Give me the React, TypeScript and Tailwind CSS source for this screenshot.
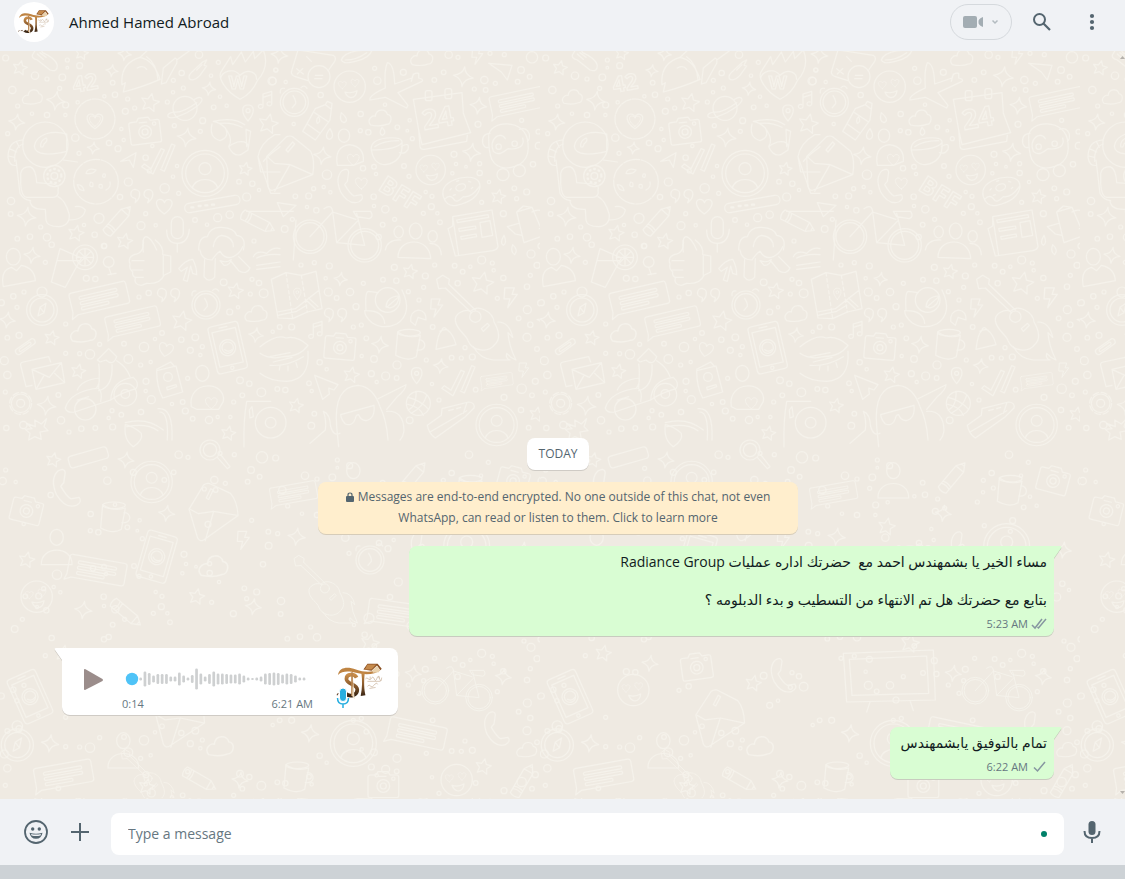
import type { ReactNode } from 'react'

type Spot = [x: number, y: number, size: number]

interface PatchProps {
  x: number
  y: number
  dots: Spot[]
  stars?: Spot[]
  sparkles?: Spot[]
  children?: ReactNode
}

interface PlaceProps {
  at: [number, number]
  scale?: number
  turn?: number
  children: ReactNode
}

const TEXT = 'font-["Open_Sans","DejaVu_Sans",sans-serif]'

// heights of the voice message bars, left to right
const BARS = [
  3, 15, 12, 7, 10, 10, 10, 5, 5, 13, 7, 3, 8, 21, 11, 5, 10, 15, 11, 11, 10, 9, 9, 11, 7, 3, 2, 3,
  5, 11, 12, 13, 12, 9, 11, 10, 7, 3, 3,
]

const DOTS_A: Spot[] = [
  [17, 24, 9], [105, 77, 11], [141, 87, 6], [187, 82, 10], [239, 47, 9], [202, 30, 6], [202, 53, 4],
  [37, 120, 11], [179, 115, 6], [53, 168, 6], [197, 165, 9], [233, 157, 5], [345, 134, 8],
  [338, 98, 7], [313, 139, 5], [383, 147, 6], [376, 184, 9], [404, 174, 6], [545, 69, 8],
  [520, 91, 6], [519, 127, 5], [550, 114, 6], [502, 156, 6], [597, 14, 11], [655, 37, 6],
  [633, 77, 5], [641, 172, 7], [680, 167, 5], [816, 93, 12], [828, 60, 6], [660, 140, 5],
  [96, 191, 5], [141, 195, 8], [196, 195, 5], [23, 251, 6], [226, 263, 11], [327, 279, 8],
  [354, 296, 9], [364, 237, 5], [371, 270, 5], [237, 310, 6], [437, 323, 8], [457, 288, 5],
  [523, 227, 6], [601, 244, 6], [608, 212, 9], [385, 396, 12], [360, 441, 8], [494, 415, 14],
  [519, 380, 5], [531, 348, 5], [448, 363, 6], [536, 430, 6], [717, 395, 7], [757, 401, 8],
  [777, 420, 5], [740, 441, 12], [33, 453, 11], [32, 492, 7], [297, 505, 15], [423, 527, 12],
  [437, 491, 6], [467, 526, 5], [585, 510, 7], [653, 503, 12], [689, 494, 11], [621, 524, 5],
  [141, 562, 11], [90, 560, 8], [52, 566, 7], [122, 531, 6], [284, 554, 8], [252, 525, 5],
  [762, 573, 6], [313, 588, 7],
]

const DOTS_B: Spot[] = [
  [17, 60, 6], [8, 93, 11], [47, 96, 5], [152, 135, 8], [314, 55, 6], [322, 92, 11], [400, 67, 9],
  [493, 90, 7], [521, 67, 7], [536, 14, 11], [564, 22, 6], [643, 90, 11], [676, 100, 6],
  [613, 117, 6], [647, 120, 7], [660, 10, 6], [703, 14, 6], [743, 95, 7], [753, 60, 10],
  [779, 80, 7], [786, 22, 17], [345, 164, 5], [272, 192, 8], [271, 242, 6], [295, 247, 8],
  [382, 232, 7], [412, 242, 4], [427, 266, 6], [419, 211, 5], [624, 223, 9], [71, 222, 5],
  [805, 245, 7], [806, 287, 10], [552, 313, 9], [558, 342, 5], [547, 370, 5], [588, 350, 4],
  [629, 369, 8], [629, 341, 6], [402, 348, 7], [417, 379, 6], [318, 372, 5], [312, 350, 7],
  [279, 355, 8], [171, 374, 14], [131, 416, 6], [161, 411, 5], [116, 438, 9], [76, 439, 7],
  [181, 427, 5], [111, 471, 5], [139, 481, 8], [67, 508, 6], [44, 537, 10], [311, 440, 8],
  [312, 468, 5], [346, 478, 11], [338, 524, 7], [326, 561, 8], [374, 508, 6], [467, 426, 5],
  [486, 439, 6], [484, 470, 9], [502, 490, 5], [460, 490, 6], [510, 517, 7], [635, 457, 6],
  [657, 396, 5], [733, 415, 7], [740, 446, 6], [770, 426, 9], [789, 343, 8], [700, 491, 9],
  [755, 211, 6],
]

const DOTS_C: Spot[] = [
  [155, 14, 8], [136, 67, 6], [312, 18, 8], [259, 115, 9], [286, 117, 8], [40, 169, 8],
  [72, 156, 6], [4, 188, 9], [51, 202, 6], [22, 293, 7], [57, 286, 9], [197, 252, 6],
  [417, 171, 6], [446, 159, 8], [671, 127, 10], [756, 118, 6], [777, 129, 8], [791, 160, 13],
  [751, 162, 6], [714, 202, 5], [689, 216, 9], [13, 362, 12], [22, 405, 11], [16, 456, 6],
  [197, 340, 6], [239, 341, 6], [270, 343, 14], [299, 313, 6], [385, 357, 13], [372, 311, 7],
  [432, 321, 14], [465, 297, 5], [486, 279, 7], [422, 375, 6], [452, 366, 5], [544, 299, 8],
  [586, 292, 10], [571, 331, 9], [607, 320, 6], [601, 345, 5], [438, 424, 9], [437, 453, 5],
  [454, 479, 12], [563, 415, 6], [175, 465, 7], [183, 541, 11], [70, 555, 11], [19, 564, 8],
  [207, 576, 6], [244, 566, 8], [286, 564, 7], [336, 512, 6], [364, 524, 7], [326, 534, 5],
  [338, 561, 9], [423, 516, 8], [516, 492, 5], [548, 486, 7], [556, 513, 9], [578, 536, 7],
  [627, 540, 11], [653, 531, 5], [691, 531, 5], [701, 486, 6], [720, 421, 10], [748, 431, 8],
  [784, 457, 13], [727, 466, 7],
]

const DOTS_D: Spot[] = [
  [93, 75, 6], [133, 68, 6], [178, 78, 9], [167, 115, 5], [175, 156, 12], [240, 156, 11],
  [200, 174, 7], [280, 130, 6], [258, 200, 9], [339, 119, 7], [379, 122, 8], [373, 82, 9],
  [466, 108, 9], [494, 75, 6], [415, 155, 6], [461, 142, 6], [447, 180, 6], [554, 77, 7],
  [578, 95, 7], [601, 80, 5], [635, 60, 12], [667, 69, 6], [671, 91, 5], [563, 130, 8],
  [700, 114, 8], [783, 42, 12], [812, 18, 8], [801, 76, 9], [771, 140, 8], [781, 106, 6],
  [682, 175, 6], [772, 209, 12], [746, 235, 7], [781, 254, 8], [771, 292, 12], [812, 189, 9],
  [29, 261, 7], [65, 261, 9], [8, 275, 5], [250, 261, 6], [274, 255, 6], [289, 295, 7],
  [312, 357, 10], [275, 348, 5], [149, 367, 8], [170, 388, 5], [381, 375, 12], [347, 408, 12],
  [304, 401, 9], [380, 414, 7], [320, 426, 5], [488, 261, 7], [545, 353, 7], [574, 354, 6],
  [607, 351, 9], [585, 323, 6], [801, 327, 7], [469, 360, 6], [486, 432, 5], [507, 480, 6],
  [617, 449, 7], [702, 472, 9], [755, 446, 14], [796, 424, 9], [786, 466, 7], [753, 510, 8],
  [117, 430, 7], [125, 453, 5], [22, 447, 7], [46, 450, 8], [133, 521, 7], [124, 557, 10],
  [419, 541, 10], [776, 563, 7],
]

const STAR =
  'M0-10 3-3.6 9.6-3.1 4.6 1.6 6 8.3 0 5-6 8.3-4.6 1.6-9.6-3.1-3-3.6Z'
const SPARKLE = 'M0-10Q1-2 10 0 1 2 0 10-1 2-10 0-1-2 0-10Z'
const HEART = 'M0 24C-30 4-28-20-13-20-5-20-1-14 0-10 2-15 7-21 15-19 29-16 26 6 0 24Z'

function Place({ at, scale = 1, turn = 0, children }: PlaceProps) {
  return <g transform={`translate(${at[0]} ${at[1]}) rotate(${turn}) scale(${scale})`}>{children}</g>
}

function Patch({ x, y, dots, stars = [], sparkles = [], children }: PatchProps) {
  return (
    <g transform={`translate(${x} ${y})`}>
      {dots.map(([cx, cy, r]) => (
        <circle key={`${cx}-${cy}`} cx={cx} cy={cy} r={r} />
      ))}
      {stars.map(([sx, sy, r]) => (
        <path key={`${sx}-${sy}`} d={STAR} strokeWidth={36 / r} transform={`translate(${sx} ${sy}) rotate(12) scale(${r / 10})`} />
      ))}
      {sparkles.map(([sx, sy, r]) => (
        <path key={`${sx}-${sy}`} d={SPARKLE} strokeWidth={36 / r} transform={`translate(${sx} ${sy}) rotate(8) scale(${r / 10})`} />
      ))}
      {children}
    </g>
  )
}

const Heart = () => <path d={HEART} />
const Cloud = () => <path d="M-28 20C-42 4-22-10-14-6-12-30 18-30 22-12 40-10 34 18 20 18Q0 26-28 20Z" />
const Camera = () => (
  <>
    <path d="M-46-24Q-46-30-38-30H-22L-16-40H14L20-30H40Q46-30 46-24V32Q46 38 40 38H-40Q-46 38-46 32Z" />
    <circle r="19" cy="3" />
    <circle r="9" cy="3" />
    <circle r="5" cx="30" cy="-19" />
    <path d="M-14-26H8" />
  </>
)
const Avatar = () => (
  <>
    <circle r="69" />
    <circle r="58" />
    <circle r="18" cy="-14" />
    <path d="M-38 44C-30 10 30 10 38 44" />
  </>
)
const Smiley = () => (
  <>
    <circle r="47" />
    <Place at={[-22, -6]} scale={0.5}><Heart /></Place>
    <Place at={[16, -12]} scale={0.5}><Heart /></Place>
    <path d="M-14 16Q4 22 22 12 20 32 4 33-8 32-14 16Z" />
  </>
)
const Card = () => (
  <>
    <path d="M-78-34H80Q88-34 88-26V26Q88 34 80 34H-72L-92 44-86 26V-26Q-86-34-78-34Z" />
    <rect x="-58" y="-18" width="116" height="9" rx="4" />
    <rect x="-58" y="-2" width="116" height="9" rx="4" />
    <rect x="-58" y="14" width="84" height="9" rx="4" />
  </>
)
const Clock = () => (
  <>
    <circle r="42" />
    <circle r="34" />
    <path d="M-4-20Q6-4 4 4L-6 16M-42-28Q-44-44-30-42M20-44Q30-54 38-42" />
  </>
)
const Pencil = () => (
  <path d="M-52-15H30L54 0 30 15H-52Q-60 0-52-15ZM30-15V15M-30-15Q-24 0-30 15M-38-15Q-32 0-38 15M45-6V6" />
)
const Note = () => <path d="M-8 20V-18L18-26V12M-8-8 18-16M-8 20A7 6 0 1 1-12 14M18 12A7 6 0 1 1 14 6" />
const Pin = () => (
  <>
    <path d="M0 26C-24-2-18-22 0-22S24-2 0 26Z" />
    <circle r="6" cy="-5" />
  </>
)
const Quotes = () => (
  <path d="M-24 18Q-12 8-12-4A12 12 0 1 0-26 6Q-20 6-24 18ZM10 18Q24 8 24-4A12 12 0 1 0 9 6Q16 6 10 18Z" />
)
const Bolt = () => <path d="M-16-26H10L4-8H18L-8 28-2 4H-18Z" />
const Checks = () => (
  <path d="M-50 20-42 12-22 26 8-34 18-30-16 42ZM10 24 40-48 50-44 18 34 6 28" />
)
const Guitar = () => (
  <>
    <path d="M-8-22C14-46 60-20 62 10 76 34 84 60 64 78 44 104-2 98-16 66-22 46-50 36-54 6-56-16-26-30-8-22Z" />
    <circle r="17" cx="6" cy="-6" />
    <path d="M-6-18-84-92M6-26-74-104M-84-92-104-90-110-118-92-130-72-118-74-104M24 30 42 14 48 20 30 38Z" />
    <path d="M74 10Q108 10 118 56L104 42Q106 80 128 124 112 118 100 104 96 120 110 124H60Q20 120 0 84" />
  </>
)
const Mug = () => (
  <>
    <path d="M-32-36-38 34Q0 54 24 38L36-26Q0-14-32-36Z" />
    <ellipse rx="34" ry="10" cx="2" cy="-34" />
    <path d="M32-12C54-14 58 22 26 18" />
  </>
)
const Phone = () => (
  <path d="M-24-50Q-6-60-4-46L-8-18Q-14-12-16-8 0 20 12 26L34 22Q44 34 26 44-4 54-28 14-46-28-24-50Z" />
)
const Envelope = () => (
  <path d="M-70-20-10-80Q0-84 8-80L62-36Q76-10 68 34L-50 80Q-62 84-66 70ZM-66-18-46 0 0 4 68 34M-46 84 0 4M-12-40 8-64 14-58-6-34Z" />
)
const Tablet = () => (
  <>
    <rect x="-46" y="-72" width="92" height="144" rx="10" />
    <rect x="-36" y="-54" width="72" height="106" />
    <circle r="24" />
    <circle r="17" />
    <path d="M-10 4Q0 16 12 8M-12-63H12" />
    <circle r="5" cy="62" />
  </>
)
const Person = () => (
  <>
    <ellipse rx="20" ry="24" cy="-38" />
    <path d="M-46 44C-48-14 48-14 46 44Z" />
  </>
)
const Bicycle = () => (
  <>
    <circle r="50" cx="-80" cy="40" />
    <circle r="42" cx="-80" cy="40" />
    <circle r="50" cx="84" cy="66" />
    <circle r="42" cx="84" cy="66" />
    <path d="M-80 40-12-34Q-14-60-38-44M-12-34 58-12M-12-34 0 58 64-8M0 58 84 66 60-30M50-36H102Q112-20 98-14L60-20Z" />
  </>
)
const Compass = () => (
  <>
    <circle r="46" />
    <circle r="36" />
    <circle r="15" cy="-54" />
    <path d="M-12 18-6-8 12-20 6 8ZM-6-8 6 8" />
  </>
)

function Backdrop() {
  return (
    <svg className="absolute inset-0 w-full h-full" aria-hidden="true">
      <defs>
        <pattern id="doodles" width="540" height="748" y="-1" patternUnits="userSpaceOnUse" viewBox="0 0 1620 2244">
          <g fill="none" stroke="#f5f2eb" strokeWidth="3.6" strokeLinejoin="round" strokeLinecap="round">
            <Patch
              x={0}
              y={0}
              dots={DOTS_A}
              stars={[[60, 54, 22], [450, 158, 28], [805, 222, 30], [736, 357, 20], [228, 550, 24], [374, 574, 24], [245, 10, 20]]}
              sparkles={[[168, 152, 28], [336, 62, 18], [627, 116, 20], [50, 216, 24], [560, 262, 28], [280, 294, 18], [80, 500, 28], [374, 12, 20]]}
            >
              <path d="M100 10Q90 24 112 30L150 60Q172 68 172 46 168 26 128 8L122-4 106 0ZM112 12 130 28M120 8 138 22" />
              <text x="222" y="128" fontSize="66" fontWeight="700" transform="rotate(-10 222 128)">42</text>
              <Place at={[97, 142]} scale={0.9}><Cloud /></Place>
              <circle cx="285" cy="207" r="60" strokeDasharray="30 4" />
              <Place at={[285, 212]}><Heart /></Place>
              <Place at={[285, 212]} scale={0.7}><Heart /></Place>
              <Place at={[435, 243]} turn={-7}><Camera /></Place>
              <path d="M420 22Q462 30 480 88 430 110 370 126L376 98 366 104Q360 40 420 22ZM420 22 450-6M440 20Q470 40 474 90M484 102 490 54 526 24Q532 26 530 40L498 98ZM412 54Q430 44 440 58M530 30 580-6" />
              <path d="M568 86Q564 74 580 62L608 36 620 30 612 46 620 48 600 76Q580 96 568 86ZM590 60 606 44" />
              <circle cx="555" cy="175" r="36" />
              <path d="M522 186Q500 190 504 200 514 210 560 188 606 164 606 148 602 136 584 148M522 186Q546 190 590 158" />
              <path d="M720 148C672 120 652 80 664 64L692 20 698 44 724 6 736 36 760 4 764 26 790 0Q810 50 772 92 756 130 720 148ZM720 76C700 50 666 66 662 84M720 76C744 54 770 66 770 88" />
              <text x="686" y="118" fontSize="56" fontWeight="700">W</text>
              <Place at={[797, 150]}><Note /></Place>
              <Place at={[744, 187]}><Pin /></Place>
              <path d="M640 214Q700 200 734 224M660 220Q694 216 726 232M636 222Q626 262 660 272 690 262 676 234 658 216 640 214M680 240Q700 270 686 290 700 320 722 314L744 300Q750 270 712 276 696 282 686 290M744 300 752 244 738 238 740 290" />
              <circle cx="136" cy="284" r="68" />
              <path d="M200 252C160 240 110 250 103 288 104 320 160 314 200 304ZM122 290Q120 272 138 264 146 270 132 282 130 294 122 290Z" />
              <path d="M68 270Q24 272 24 322 28 350 50 346M70 282Q42 290 44 334M28 296 50 306M26 318 44 322M50 276 58 292M48 330 60 430Q70 450 92 452M62 400V370Q66 350 90 350 108 356 110 398L160 402Q180 408 174 420 178 440 160 442H80Q64 440 62 400ZM190 330 232 336M90 452Q92 480 136 478L138 510Q140 530 176 530 210 526 208 494 196 450 174 440M208 510Q250 510 256 480 244 466 226 470" />
              <circle cx="163" cy="378" r="32" />
              <circle cx="163" cy="378" r="10" />
              <circle cx="163" cy="378" r="21" strokeDasharray="2 12" strokeWidth="7" />
              <circle cx="288" cy="395" r="67" strokeDasharray="50 5" />
              <path d="M258 370Q262 352 288 360 280 374 258 370ZM232 404Q248 404 252 422 236 422 232 404ZM310 372Q320 370 314 382 304 382 310 372ZM272 396Q282 396 278 410 264 410 272 396ZM298 404Q310 400 306 414 294 416 298 404ZM330 396Q334 412 318 420" />
              <path d="M362 334 408 308 400 352 388 330Z" />
              <Place at={[475, 330]}><Checks /></Place>
              <Place at={[615, 370]}><Avatar /></Place>
              <Place at={[432, 438]} scale={1.1}><Quotes /></Place>
              <Place at={[355, 510]} turn={-48}><Pencil /></Place>
              <Place at={[775, 517]} turn={27}><Pencil /></Place>
              <Place at={[493, 468]}><Heart /></Place>
              <rect x="553" y="448" width="168" height="28" rx="14" transform="rotate(-10 637 462)" />
              <path d="M574 472H580M596 468H602M616 466H622M636 464H642" strokeWidth="7" />
              <rect x="514" y="500" width="36" height="66" rx="18" />
              <path d="M500 540Q500 580 532 580T568 538M532 582V606" />
              <path d="M840 254H824Q780 280 774 320L812 430H840M774 320 782 366 840 366M840 290Q800 320 790 334" />
              <path d="M430 606Q424 560 440 560 456 566 470 600M596 600Q596 560 622 560 630 530 665 532 704 534 710 556 740 560 730 600M640 590Q644 560 664 556 700 560 700 590" />
            </Patch>
            <Patch
              x={810}
              y={0}
              dots={DOTS_B}
              stars={[[685, 440, 22]]}
              sparkles={[[580, 80, 30], [625, 167, 25], [605, 307, 27], [157, 317, 26], [28, 15, 25]]}
            >
              <path d="M84 0 64 66Q64 76 76 80L114 92M84 0 190 16Q200 22 194 34L176 60M80 56 100 72M98 56 82 72M110 20 124 34" />
              <circle cx="147" cy="80" r="33" />
              <path d="M136 76H158M134 86H156M214 30Q220 10 262 2L306 0Q300 24 256 34 220 44 214 30ZM226 30Q260 30 290 8" />
              <Place at={[455, 24]}><Cloud /></Place>
              <Place at={[330, 205]}><Cloud /></Place>
              <Place at={[622, 18]} scale={0.9}><Bolt /></Place>
              <path d="M656 40 726 46 712 90 694 66Z" />
              <Place at={[239, 110]}><Smiley /></Place>
              <Place at={[482, 360]} scale={0.94}><Smiley /></Place>
              <path d="M352 38Q372 40 374 102L426 84Q430 66 446 70L446 84Q462 88 456 94L384 128 414 166 410 174 346 142 300 150Q296 136 346 114 342 60 352 38ZM430 72 424 94" />
              <path d="M430 148 576 128 580 190 602 248 456 284 446 240ZM446 240 450 290Q452 300 464 298L590 274 592 256" />
              <rect x="466" y="122" width="20" height="30" rx="6" />
              <rect x="525" y="116" width="20" height="30" rx="6" />
              <text x="462" y="240" fontSize="82" fontWeight="700" transform="rotate(-10 462 240)">24</text>
              <Place at={[740, 156]} turn={-12} scale={0.92}><Card /></Place>
              <Place at={[73, 157]}><Clock /></Place>
              <path d="M98 244 136 176 166 164 184 178 180 210 136 270ZM134 188 176 216M112 222 150 250M166 164 172 154 186 160 184 178M146 200Q136 210 142 220 154 216 146 200Z" />
              <path d="M214 188Q206 214 222 218 240 212 214 188ZM180 236Q160 262 178 268 196 262 180 236ZM336 232Q324 252 338 256 352 248 336 232Z" />
              <ellipse cx="222" cy="257" rx="17" ry="20" />
              <path d="M202 346Q192 290 238 284 284 290 280 334L250 346Z" />
              <Place at={[250, 328]} scale={0.75}><Heart /></Place>
              <path d="M304 300Q300 270 350 264 398 260 396 278 380 300 304 300ZM304 300Q312 344 346 344 400 336 396 278M394 290Q420 274 414 298 404 314 388 308M314 290Q340 272 386 272" />
              <Place at={[60, 340]}><Envelope /></Place>
              <Place at={[240, 412]}><Phone /></Place>
              <Place at={[274, 399]} scale={0.75}><Heart /></Place>
              <text x="322" y="418" fontSize="72" fontWeight="700" transform="rotate(32 322 418)">BFF</text>
              <path d="M520 440Q510 400 570 384 630 374 630 410 624 452 560 466 530 472 520 440ZM524 448Q540 430 552 448 560 462 580 440 604 444 628 410" />
              <ellipse cx="572" cy="412" rx="15" ry="10" transform="rotate(-20 572 412)" />
              <path d="M540 420 544 416M560 394 566 392M596 394 602 396M604 416 608 412M550 436 556 434" />
              <path d="M656 262C652 210 770 200 774 280 780 330 750 352 708 354 664 350 656 320 656 262ZM660 250Q634 252 638 280 644 296 654 292M748 238Q770 230 778 252 780 270 772 274M706 266C690 240 654 270 670 304 686 320 704 304 714 296 742 300 766 290 758 264 736 244 706 266ZM690 350V314L700 296M742 350 756 310 740 296M700 320 716 300 722 318" />
              <circle cx="686" cy="290" r="8" />
              <circle cx="734" cy="281" r="8" />
              <circle cx="699" cy="374" r="18" />
              <circle cx="748" cy="362" r="18" />
              <path d="M22 458 78 466 40 500Z" />
              <Place at={[200, 520]}><Bicycle /></Place>
              <ellipse cx="386" cy="546" rx="14" ry="18" />
              <ellipse cx="437" cy="543" rx="19" ry="24" />
              <ellipse cx="488" cy="559" rx="14" ry="17" />
              <path d="M384 622C384 560 480 560 482 626ZM346 600Q352 568 392 570M480 580Q512 580 514 614" />
              <path d="M548 500 666 480 684 590Q680 600 668 602L556 618 534 536 548 528ZM548 500 566 616M560 510 654 494 656 502 562 518ZM566 536 616 528 618 536 568 544ZM572 560 618 552 620 560 574 568ZM630 518 660 512 668 556 636 562Z" />
              <path d="M740 486 786 472 822 556 762 578ZM746 520 712 530 736 552 756 556M786 486Q816 470 822 500 824 530 808 536M740 486 760 468 786 472" />
              <path d="M702 556Q688 580 700 586 712 580 702 556ZM728 584Q720 606 734 614 746 600 728 584Z" />
            </Patch>
            <Patch
              x={0}
              y={570}
              dots={DOTS_C}
              stars={[[155, 294, 22], [235, 394, 22], [545, 243, 30], [706, 153, 24], [685, 580, 22]]}
              sparkles={[[96, 46, 24], [22, 240, 24], [140, 497, 28], [768, 285, 22]]}
            >
              <ellipse cx="40" cy="50" rx="21" ry="25" />
              <path d="M10 140Q0 90 34 82L50 92 64 76Q104 84 106 122Z" />
              <path d="M180 26 244 54 196 142 154 126ZM172 62H238" />
              <circle cx="255" cy="52" r="37" />
              <circle cx="255" cy="52" r="26" />
              <path d="M255 28V76M231 52H279M238 35 272 69M272 35 238 69" />
              <circle cx="326" cy="66" r="16" />
              <path d="M326 82 334 104M324 104 348 100" />
              <path d="M430 0Q434 40 402 44 382 52 390 72 386 86 398 96 396 108 406 112 400 134 424 136L440 130Q480 134 492 106L512 96V48L488 44Q492 20 466 0M396 62H432M396 90H428M404 112H430M490 46V106" />
              <path d="M536 86Q556 60 578 58 590 80 590 104L578 100 572 78 562 124 550 120 562 82 544 94Z" />
              <path d="M600 30Q604 60 636 60 650 40 660 34 676 60 700 50 720 40 728 20M614 56 612 110Q626 130 644 112L646 56M716 50 750 84Q740 106 716 92L690 60M660 62Q680 70 694 58 688 78 672 76Z" />
              <path d="M760 50Q770 30 800 40 820 20 840 26M770 54Q800 40 840 44M770 76 840 66M770 88 840 80" />
              <Place at={[297, 175]} turn={-13}><Card /></Place>
              <Place at={[397, 245]} turn={-13} scale={0.92}><Card /></Place>
              <Place at={[126, 210]}><Compass /></Place>
              <Place at={[250, 280]} scale={1.15}><Cloud /></Place>
              <Place at={[768, 222]}><Cloud /></Place>
              <rect x="42" y="311" width="68" height="18" rx="9" transform="rotate(-35 76 320)" />
              <rect x="54" y="316" width="42" height="8" rx="4" transform="rotate(-35 76 320)" />
              <path d="M96 436 78 440 62 376Q60 368 70 366L146 350 152 366" />
              <path d="M96 388 184 368 194 428 108 448ZM96 388 148 412 184 368M108 448 132 406M194 428 164 400" />
              <path d="M196 504Q210 454 296 444 300 390 296 372M196 504Q200 520 224 516L332 480Q336 420 400 412 420 430 408 446 360 460 332 480M302 484Q308 456 296 446M232 450Q244 420 298 414 300 430 288 446M336 374Q340 440 296 452M350 362Q380 380 390 410M292 360 326 326 350 350Q340 380 318 360L300 366ZM232 480 266 470" />
              <circle cx="256" cy="508" r="32" />
              <circle cx="376" cy="464" r="34" />
              <circle cx="376" cy="462" r="13" />
              <circle cx="62" cy="490" r="33" strokeDasharray="18 8" />
              <circle cx="62" cy="490" r="28" />
              <circle cx="62" cy="490" r="12" />
              <path d="M80 550 106 560 104 540 124 552 140 536 132 560 144 572 120 576 124 598 104 590 86 600 90 580 76 568 96 566Z" />
              <Place at={[512, 165]} scale={1.1}><Quotes /></Place>
              <Place at={[618, 195]}><Clock /></Place>
              <Place at={[498, 328]} scale={0.9} turn={12}><Heart /></Place>
              <Place at={[683, 323]} turn={-13}><Tablet /></Place>
              <path d="M470 392 528 378 548 456 488 474Q470 440 470 392ZM470 388 512 366 524 380M500 442 528 434 530 440 502 450Z" />
              <circle cx="504" cy="411" r="13" />
              <path d="M574 500C560 420 680 420 670 484L656 508H590Z" />
              <ellipse cx="607" cy="400" rx="20" ry="24" />
              <Place at={[634, 488]} scale={0.75}><Heart /></Place>
              <path d="M376 548Q440 530 490 570M380 560Q440 548 474 572M474 506Q520 500 516 600M480 516Q506 516 502 600M376 554Q370 600 400 620 430 600 424 580 402 560 376 554" />
              <path d="M740 484H812M740 484Q730 540 732 620M748 510 756 500 760 530 750 534Z" />
            </Patch>
            <Patch
              x={810}
              y={570}
              dots={DOTS_D}
              stars={[[637, 130, 34], [420, 95, 22], [244, 405, 24], [78, 497, 22], [800, 523, 22]]}
              sparkles={[[212, 117, 20], [330, 314, 25], [512, 378, 22], [825, 242, 24]]}
            >
              <path d="M4 118 48 98 94 106 138 94 156 206 112 216 68 236 24 234ZM22 216 76 206 148 150M24 226 80 214 110 196M108 180 136 206M116 174 144 200" />
              <path d="M48 98 68 236M94 106 112 216" strokeDasharray="10 8" />
              <Place at={[82, 160]} scale={0.7}><Pin /></Place>
              <path d="M288 210Q284 154 296 154L324 158M396 150Q430 220 380 252 340 270 306 248 284 230 284 212 340 210 344 250" />
              <circle cx="353" cy="180" r="37" />
              <path d="M348 200Q350 170 386 168 388 196 360 204ZM350 202 384 172" />
              <path d="M422 244Q420 214 446 210 470 214 468 240L444 232 436 256Z" />
              <Place at={[415, 312]}><Mug /></Place>
              <path d="M498 328Q504 280 514 274 520 254 532 270 550 282 558 314ZM510 274Q520 266 534 270" />
              <Place at={[500, 203]}><Bolt /></Place>
              <Place at={[722, 172]} scale={1.1}><Bolt /></Place>
              <Place at={[762, 390]} scale={0.8}><Bolt /></Place>
              <Place at={[610, 236]}><Guitar /></Place>
              <Place at={[210, 320]} turn={5}><Camera /></Place>
              <Place at={[203, 225]} scale={1.1}><Quotes /></Place>
              <Place at={[138, 270]}><Note /></Place>
              <Place at={[440, 405]}><Pin /></Place>
              <path d="M-30 320Q20 280 48 294 80 286 114 316 90 350 40 350 0 360-30 340M114 334Q120 420 50 424 0 424-30 400M0 350 60 338M10 366 66 352M0 376Q50 380 100 350M30 376 28 390M54 378V392M78 368 82 382" />
              <path d="M134 406 204 434 192 450 176 444 178 462 158 478Z" />
              <path d="M200 560Q190 440 264 436 310 440 330 500 350 540 354 600M200 560 206 620M212 524 312 496Q316 536 288 542 272 540 266 524 258 524 256 536 248 560 226 552 214 540 212 524ZM324 476 408 434Q408 448 382 470L350 508M350 514Q400 510 402 570 400 590 390 600M160 514Q180 520 182 560 190 590 210 580M160 514Q170 540 166 570L120 610" />
              <circle cx="445" cy="490" r="36" />
              <path d="M414 472Q450 480 476 508M410 492Q450 500 460 526M438 454Q440 500 414 510M470 466Q460 500 424 520" />
              <Place at={[565, 425]}><Checks /></Place>
              <Place at={[680, 422]} turn={-8} scale={0.55}><Card /></Place>
              <path d="M472 556 514 526 516 506 596 486Q616 488 612 504L586 530 496 594Q476 580 472 556ZM480 576 590 512M590 490 580 520M536 512 550 508M560 506 572 502" />
              <Place at={[680, 555]} scale={0.9}><Avatar /></Place>
              <path d="M-70-86H70M78-60 70 60" />
              <circle cx="2" cy="548" r="46" />
              <circle cx="2" cy="548" r="16" />
            </Patch>
            <Patch
              x={0}
              y={1200}
              dots={DOTS_B}
              stars={[[160, 30, 22], [80, 330, 24], [590, 440, 24]]}
              sparkles={[[378, 30, 24], [500, 190, 24], [250, 480, 26], [760, 470, 24]]}
            >
              <Place at={[265, 22]} turn={-16}><rect x="-60" y="-18" width="120" height="36" rx="10" /></Place>
              <Place at={[200, 118]} scale={1.1}><Phone /></Place>
              <Place at={[455, 96]} scale={0.9}><Avatar /></Place>
              <circle cx="630" cy="0" r="30" />
              <circle cx="630" cy="0" r="20" />
              <path d="M652 22 682 56 690 50 662 14" />
              <Place at={[80, 180]} turn={14}><Camera /></Place>
              <Place at={[340, 200]}><Mug /></Place>
              <Place at={[640, 180]} turn={-14}><Envelope /></Place>
              <Place at={[170, 300]}><Person /></Place>
              <Place at={[290, 360]} turn={10}><Card /></Place>
              <Place at={[470, 320]} turn={16}><Tablet /></Place>
              <Place at={[640, 350]} scale={1.3}><Cloud /></Place>
              <Place at={[730, 270]}><Bolt /></Place>
              <Place at={[110, 440]}><Smiley /></Place>
              <Place at={[380, 490]} turn={40}><Pencil /></Place>
            </Patch>
            <Patch
              x={810}
              y={1200}
              dots={DOTS_A}
              stars={[[230, 230, 26], [470, 420, 24]]}
              sparkles={[[80, 260, 26], [400, 190, 24], [760, 300, 24]]}
            >
              <Place at={[70, 130]} turn={-10} scale={0.8}><Card /></Place>
              <Place at={[250, 100]}><Person /></Place>
              <Place at={[430, 80]} turn={-50}><Pencil /></Place>
              <Place at={[600, 120]}><Mug /></Place>
              <Place at={[730, 90]} turn={15}><Camera /></Place>
              <Place at={[300, 330]}><Clock /></Place>
              <Place at={[160, 420]} scale={0.8}><Guitar /></Place>
              <Place at={[590, 290]}><Avatar /></Place>
              <Place at={[460, 300]}><Phone /></Place>
              <Place at={[650, 460]} turn={-12}><Envelope /></Place>
              <Place at={[380, 490]} turn={8}><Card /></Place>
            </Patch>
            <Patch
              x={0}
              y={1750}
              dots={DOTS_C}
              stars={[[190, 60, 24], [640, 150, 24], [440, 460, 24]]}
              sparkles={[[330, 90, 24], [150, 330, 26], [720, 440, 24]]}
            >
              <Place at={[280, 170]}><Smiley /></Place>
              <Place at={[90, 190]} turn={-24}><Tablet /></Place>
              <Place at={[470, 100]} turn={-8}><Camera /></Place>
              <Place at={[540, 250]} turn={-12}><Envelope /></Place>
              <Place at={[730, 130]}><Phone /></Place>
              <Place at={[52, 335]} scale={1.05}><Compass /></Place>
              <Place at={[190, 425]} turn={-10}><Card /></Place>
              <Place at={[370, 360]}><Person /></Place>
              <Place at={[440, 440]} scale={0.7}><Guitar /></Place>
              <Place at={[660, 340]} scale={1.2}><Cloud /></Place>
              <Place at={[600, 440]} turn={30}><Pencil /></Place>
            </Patch>
            <Patch
              x={810}
              y={1750}
              dots={DOTS_D}
              stars={[[300, 30, 28], [640, 400, 24]]}
              sparkles={[[430, 120, 24], [120, 300, 26], [700, 130, 24]]}
            >
              <path d="M100 60 370 50 376 200 110 206ZM118 78 350 68 356 180 126 186ZM180 206 170 236M300 202 310 232" />
              <Place at={[560, 140]} scale={0.8}><Bicycle /></Place>
              <Place at={[250, 330]}><Avatar /></Place>
              <Place at={[440, 300]} turn={12}><Card /></Place>
              <Place at={[340, 455]}><Camera /></Place>
              <Place at={[80, 430]}><Mug /></Place>
              <Place at={[560, 440]}><Smiley /></Place>
              <Place at={[770, 350]} scale={0.9}><Cloud /></Place>
              <Place at={[680, 290]}><Phone /></Place>
              <Place at={[760, 440]} turn={-60}><Pencil /></Place>
            </Patch>
          </g>
        </pattern>
      </defs>
      <rect width="100%" height="100%" fill="url(#doodles)" />
    </svg>
  )
}

function Logo({ className }: { className: string }) {
  return (
    <svg className={className} viewBox="0 0 140 112" aria-hidden="true">
      <defs>
        <linearGradient id="bronze" x1="0" y1="0" x2="0" y2="1">
          <stop offset="0" stopColor="#c98d4a" />
          <stop offset="0.5" stopColor="#8a5a2c" />
          <stop offset="1" stopColor="#3a2615" />
        </linearGradient>
      </defs>
      <path d="M5 38C10 14 34 14 58 22 84 31 104 30 132 22 112 40 82 38 58 32 36 26 18 26 5 38Z" fill="#bf8443" />
      <path d="M80 22 92 5 122 5 134 20 130 24 120 10 104 26Z" fill="#8a4f22" />
      <path d="M92 7H118L104 22H84Z" fill="#c58a4c" />
      <path d="M106 24 120 12 128 22 126 30 108 32Z" fill="#ead2ad" />
      <path
        d="M60 46C54 34 30 34 30 50 30 66 62 64 62 82 62 98 42 104 28 94"
        fill="none"
        stroke="url(#bronze)"
        strokeWidth="11"
      />
      <path d="M44 30H49V100H44Z" fill="#b98550" />
      <path d="M50 50 54 110 47 100Z" fill="#ecd9bf" />
      <path d="M74 32H84C81 60 82 80 86 98L72 100C77 78 77 54 74 32Z" fill="url(#bronze)" />
      <path d="M2 98 6 92M12 94Q20 90 24 98" stroke="#5a3a20" strokeWidth="3" fill="none" />
      <path
        d="M86 50Q90 44 95 50T104 48 112 50 120 48 128 50 134 46M92 57H130M100 43V50M126 41V48M92 72Q97 64 101 71T112 68 122 66M98 78 116 75"
        stroke="#b89b7c"
        strokeWidth="1.6"
        fill="none"
      />
    </svg>
  )
}

function Tail({ side }: { side: 'left' | 'right' }) {
  return side === 'left' ? (
    <svg className="absolute top-0 -left-2 w-3 h-4" viewBox="0 0 12 16" aria-hidden="true">
      <path d="M2 1Q0 1 1 3L8 13V16H12V0H2Z" fill="#c9c5be" />
      <path d="M2 0Q0 0 1 2L8 12V16H12V0Z" fill="#fff" />
    </svg>
  ) : (
    <svg className="absolute top-0 -right-2 w-3 h-4" viewBox="0 0 12 16" aria-hidden="true">
      <path d="M10 1Q12 1 11 3L4 13V16H0V0H10Z" fill="#c2cdb8" />
      <path d="M10 0Q12 0 11 2L4 12V16H0V0Z" fill="#d9fdd3" />
    </svg>
  )
}

function Sent({ time, read, className, children }: { time: string; read?: boolean; className: string; children: ReactNode }) {
  return (
    <div className={`relative self-end bg-[#d9fdd3] rounded-lg rounded-tr-none px-[7px] pt-1.5 pb-1 shadow-[0_1px_0_#c8cbbf] ${className}`}>
      <Tail side="right" />
      <div dir="rtl" className="text-sm leading-[19px] text-[#111b21]">
        {children}
      </div>
      <div className="flex justify-end items-center gap-[3px] h-4 mt-[7px] text-[11px] text-[#667781]">
        <span>{time}</span>
        <svg className="w-4 h-3" viewBox="0 0 16 12" fill="none" stroke="#8696a0" strokeWidth="1.5" aria-hidden="true">
          {read ? <path d="M1 7 4 10 11 1M6.500 9 7.500 10 15 1" /> : <path d="M3 6.500 6.500 10 14 1" />}
        </svg>
      </div>
    </div>
  )
}

export default function App() {
  return (
    <div className={`flex flex-col min-h-screen bg-[#f0f2f5] text-[#111b21] ${TEXT}`}>
      <header className="flex items-center h-[51px] pl-3.5 pr-[21px] pb-[7px]">
        <div className="flex items-center justify-center w-10 h-10 rounded-full bg-white shrink-0">
          <Logo className="w-8 h-[26px]" />
        </div>
        <h1 className="flex-1 ml-[15px] text-[15px]">Ahmed Hamed Abroad</h1>
        <button
          aria-label="Video call"
          className="flex items-center justify-center gap-2 w-[62px] h-9 rounded-full border border-[#d5d9dd]"
        >
          <svg className="w-5 h-3" viewBox="0 0 20 12" fill="#a3adb3" aria-hidden="true">
            <rect width="14" height="12" rx="2" />
            <path d="M20 1V11Q15 9 15.500 6 15 3 20 1Z" />
          </svg>
          <svg className="w-2 h-2" viewBox="0 0 8 8" fill="none" stroke="#b3bbc0" strokeWidth="1.5" aria-hidden="true">
            <path d="M1.500 2.500 4 5 6.500 2.500" />
          </svg>
        </button>
        <button aria-label="Search" className="ml-[18px]">
          <svg className="w-6 h-6" viewBox="0 0 24 24" fill="none" stroke="#54656f" aria-hidden="true">
            <circle cx="9.500" cy="9.500" r="5.500" strokeWidth="2" />
            <path d="M13.500 13.500 20 20" strokeWidth="2.200" />
          </svg>
        </button>
        <button aria-label="Menu" className="ml-[26px]">
          <svg className="w-6 h-6" viewBox="0 0 24 24" fill="#54656f" aria-hidden="true">
            <circle cx="12" cy="6" r="2.100" />
            <circle cx="12" cy="12" r="2.100" />
            <circle cx="12" cy="18" r="2.100" />
          </svg>
        </button>
      </header>

      <main className="relative flex flex-1 flex-col bg-[#efeae2]">
        <Backdrop />
        <div className="absolute right-0 inset-y-0 flex flex-col justify-between py-1">
          <svg className="w-[5px] h-[5px]" viewBox="0 0 5 5" fill="#b5b1ab" aria-hidden="true">
            <path d="M0 4 2.500 1 5 4Z" />
          </svg>
          <svg className="w-[5px] h-[5px]" viewBox="0 0 5 5" fill="#b5b1ab" aria-hidden="true">
            <path d="M0 1 2.500 4 5 1Z" />
          </svg>
        </div>
        <div className="relative flex flex-1 flex-col justify-end gap-3 pl-[62px] pr-[71px] pb-5">
          <div className="self-center px-3 py-1.5 rounded-lg bg-white text-xs leading-5 text-[#54656f] shadow-[0_1px_0_#cfcbc5]">
            TODAY
          </div>
          <button className="self-center w-[480px] max-w-full px-6 pt-1 pb-1.5 rounded-lg bg-[#ffeecd] text-xs leading-[21px] text-[#54656f] shadow-[0_1px_0_#d6ccb9]">
            <svg className="inline w-2 h-2.5 mr-1 mb-0.5" viewBox="0 0 8 10" fill="#54656f" aria-hidden="true">
              <rect y="4" width="8" height="6" rx="1" />
              <path d="M2 5V3Q2 1 4 1T6 3V5" fill="none" stroke="#54656f" strokeWidth="1.200" />
            </svg>
            Messages are end-to-end encrypted. No one outside of this chat, not even WhatsApp, can read or listen to
            them. Click to learn more
          </button>

          <Sent time="5:23 AM" read className="w-[65%]">
            <p>مساء الخير يا بشمهندس احمد مع &nbsp;حضرتك اداره عمليات Radiance Group</p>
            <p className="mt-[19px]">بتابع مع حضرتك هل تم الانتهاء من التسطيب و بدء الدبلومه ؟</p>
          </Sent>

          <div className="relative self-start flex w-[336px] max-w-full h-[67px] pl-[19px] pr-3.5 rounded-lg rounded-tl-none bg-white shadow-[0_1px_0_#cfcbc5]">
            <Tail side="left" />
            <button aria-label="Play voice message" className="self-start mt-5">
              <svg className="w-6 h-6" viewBox="0 0 24 24" fill="#9b8d8b" aria-hidden="true">
                <path d="M3 2Q3 .5 4.500 1.200L21.500 11Q22.500 12 21.500 13L4.500 21.800Q3 22.500 3 21Z" />
              </svg>
            </button>
            <div className="flex flex-1 flex-col ml-[17px] pt-5 text-[11px] text-[#667781]">
              <svg className="w-[190px] h-6" viewBox="0 0 190 24" aria-hidden="true">
                {BARS.map((h, i) => (
                  <rect key={i} x={17.3 + i * 4.3} y={11 - h / 2} width="2.700" height={h} rx="1.300" fill="#ced0d1" />
                ))}
                <circle cx="10" cy="11" r="6.200" fill="#4fc3f7" />
              </svg>
              <div className="flex justify-between w-[191px] mt-1 leading-4">
                <span>0:14</span>
                <span>6:21 AM</span>
              </div>
            </div>
            <div className="relative w-12 pt-3.5">
              <Logo className="w-12 h-[38px]" />
              <svg className="absolute left-0 bottom-1.5 w-3.5 h-[22px]" viewBox="0 0 14 22" aria-hidden="true">
                <path d="M7 1A3.500 3.500 0 0 1 10.500 4.500V11A3.500 3.500 0 0 1 3.500 11V4.500A3.500 3.500 0 0 1 7 1Z" fill="#27aee0" stroke="#fff" />
                <path d="M1.500 11Q1.500 17 7 17T12.500 11M7 17V21" fill="none" stroke="#27aee0" strokeWidth="1.500" />
              </svg>
            </div>
          </div>

          <Sent time="6:22 AM" className="min-w-[164px]">
            <p>تمام بالتوفيق يابشمهندس</p>
          </Sent>
        </div>
      </main>

      <footer className="flex items-center h-[66px] pl-6 pr-[21px]">
        <button aria-label="Emoji">
          <svg className="w-6 h-6" viewBox="0 0 24 24" aria-hidden="true">
            <circle cx="12" cy="12" r="11" fill="none" stroke="#54656f" strokeWidth="1.800" />
            <circle cx="8.700" cy="9" r="1.700" fill="#54656f" />
            <circle cx="15.300" cy="9" r="1.700" fill="#54656f" />
            <path d="M5.500 12.800Q12 14.500 18.500 12.800 17.500 18.800 12 18.800T5.500 12.800Z" fill="#54656f" />
            <path d="M7 14Q12 15.200 17 14L16.500 15.500Q12 16.500 7.500 15.500Z" fill="#f0f2f5" />
          </svg>
        </button>
        <button aria-label="Attach" className="ml-5">
          <svg className="w-6 h-6" viewBox="0 0 24 24" stroke="#54656f" strokeWidth="2" aria-hidden="true">
            <path d="M12 3V21M3 12H21" />
          </svg>
        </button>
        <label className="flex flex-1 items-center h-[42px] ml-[19px] mt-1 px-[17px] rounded-lg bg-white">
          <input
            type="text"
            aria-label="Type a message"
            placeholder="Type a message"
            className="flex-1 min-w-0 text-sm outline-none placeholder:text-[#667781]"
          />
          <span className="w-1.5 h-1.5 rounded-full bg-[#008069]" />
        </label>
        <button aria-label="Record voice message" className="ml-4">
          <svg className="w-6 h-6" viewBox="0 0 24 24" aria-hidden="true">
            <rect x="8.500" y="1" width="7" height="14" rx="3.500" fill="#54656f" />
            <path d="M4.500 11Q4.500 18 12 18T19.500 11M12 18V23" fill="none" stroke="#54656f" strokeWidth="2" />
          </svg>
        </button>
      </footer>
      <div className="h-3.5 bg-[#cdd2d6]" />
    </div>
  )
}
